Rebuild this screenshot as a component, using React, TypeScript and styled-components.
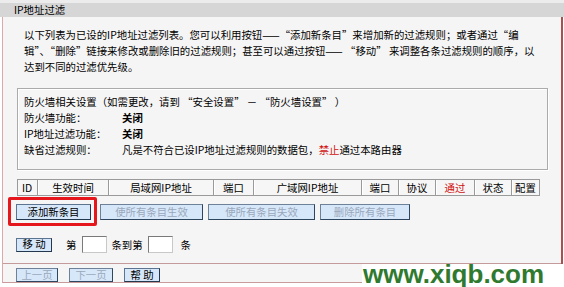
import styled, { createGlobalStyle, css } from 'styled-components';

const GlobalStyle = createGlobalStyle`
  html, body {
    margin: 0;
    padding: 0;
    background: #ffffff;
  }
  body {
    width: 564px;
    height: 287px;
    overflow: hidden;
    font-family: "Noto Sans CJK SC", "DejaVu Sans", sans-serif;
    font-size: 10.4px;
    color: #000;
  }
`;

const Page = styled.div`
  position: relative;
  width: 564px;
  height: 287px;
`;

const Header = styled.div`
  height: 14px;
  line-height: 14px;
  border-top: 3px solid #ececec;
  background: #d6d6d6;
  padding-left: 14px;
`;

const Panel = styled.div`
  margin: 0 1px 0 2px;
  height: 266px;
  box-sizing: border-box;
  padding: 10px 0 0 13px;
  background: #f6f5f5;
  border-left: 1px solid #dca8a8;
  border-right: 2px solid #a85050;
  border-bottom: 1px solid #c89a9a;
`;

const Intro = styled.div`
  padding-left: 8px;
  line-height: 16px;
`;

const Line = styled.div`
  white-space: nowrap;
`;

const InfoBox = styled.div`
  margin: 13px 0 0 1px;
  width: 531px;
  box-sizing: border-box;
  padding: 5px 0 11px 6px;
  border: 1px solid #ababab;
  box-shadow: 1px 1px 0 #ffffff, inset 1px 1px 0 #ffffff;
  line-height: 16px;
`;

const InfoRow = styled.div`
  display: flex;
  white-space: nowrap;
`;

const InfoLabel = styled.span`
  width: 98px;
`;

const Bold = styled.span`
  font-weight: bold;
`;

const Red = styled.span`
  color: #d01010;
`;

const Table = styled.div`
  display: flex;
  margin: 9px 0 0 1px;
  width: 523px;
  height: 17px;
  box-sizing: border-box;
  border: 1px solid #9a9a9a;
  background: #f6f6f6;
`;

const Cell = styled.div<{ $w: number; $red?: boolean; $left?: boolean }>`
  width: ${(p) => p.$w}px;
  box-sizing: border-box;
  line-height: 15px;
  text-align: ${(p) => (p.$left ? 'left' : 'center')};
  padding-left: ${(p) => (p.$left ? '4px' : '0')};
  color: ${(p) => (p.$red ? '#d01010' : '#000')};
  white-space: nowrap;
  & + & {
    border-left: 1px solid #9a9a9a;
    box-shadow: inset 1px 0 0 #ffffff;
  }
`;

const Row = styled.div<{ $top: number; $gap?: number }>`
  display: flex;
  align-items: center;
  margin-top: ${(p) => p.$top}px;
  gap: ${(p) => p.$gap ?? 0}px;
`;

const Button = styled.button<{ $w: number; $h: number; $off?: boolean; $ml?: number }>`
  width: ${(p) => p.$w}px;
  height: ${(p) => p.$h}px;
  padding: 0;
  margin: 0 0 0 ${(p) => p.$ml ?? 0}px;
  font-family: inherit;
  font-size: 10.4px;
  line-height: 1;
  background: #d6e7fa;
  border: 1px solid;
  border-color: #5c7490 #22384f #22384f #5c7490;
  color: #000;
  white-space: nowrap;
  ${(p) =>
    p.$off &&
    css`
      color: #9aa7bb;
      border-color: #6d8198 #2e4660 #2e4660 #6d8198;
    `}
`;

const Highlight = styled.span`
  position: relative;
  display: inline-flex;
  &::before {
    content: '';
    position: absolute;
    left: -8px;
    right: -6px;
    top: -7px;
    bottom: -6px;
    border: 3px solid #e5161c;
    border-radius: 2px;
  }
`;

const Text = styled.span<{ $ml?: number }>`
  margin-left: ${(p) => p.$ml ?? 0}px;
  white-space: nowrap;
`;

const Box = styled.span<{ $ml?: number }>`
  display: inline-block;
  width: 25px;
  height: 17px;
  box-sizing: border-box;
  margin-left: ${(p) => p.$ml ?? 0}px;
  background: #ffffff;
  border: 1px solid;
  border-color: #7a7a7a #c8c8c8 #c8c8c8 #7a7a7a;
`;

const Divider = styled.div`
  height: 1px;
  margin: 10px 0 0 -13px;
  background: #c49a9a;
`;

const Watermark = styled.div`
  position: absolute;
  left: 362px;
  top: 264px;
  width: 202px;
  height: 23px;
  background: #ffffff;
  overflow: hidden;
  font-family: "Liberation Sans", Arial, sans-serif;
  font-weight: bold;
  font-size: 26px;
  line-height: 26px;
  color: #2f7a2f;
  white-space: nowrap;
  span {
    display: block;
    margin: -3px 0 0 1px;
  }
`;

const columns = [
  { name: 'ID', w: 19, left: true },
  { name: '生效时间', w: 71 },
  { name: '局域网IP地址', w: 105 },
  { name: '端口', w: 40 },
  { name: '广域网IP地址', w: 108 },
  { name: '端口', w: 37 },
  { name: '协议', w: 37 },
  { name: '通过', w: 39, red: true },
  { name: '状态', w: 37 },
  { name: '配置', w: 28 },
];

export default function App() {
  return (
    <Page>
      <GlobalStyle />
      <Header>IP地址过滤</Header>
      <Panel>
        <Intro>
          <Line>以下列表为已设的IP地址过滤列表。您可以利用按钮——“添加新条目”来增加新的过滤规则；或者通过“编</Line>
          <Line>辑”、“删除”链接来修改或删除旧的过滤规则；甚至可以通过按钮—— “移动” 来调整各条过滤规则的顺序，以</Line>
          <Line>达到不同的过滤优先级。</Line>
        </Intro>
        <InfoBox>
          <InfoRow>防火墙相关设置（如需更改，请到 “安全设置” － “防火墙设置” ）</InfoRow>
          <InfoRow>
            <InfoLabel>防火墙功能：</InfoLabel>
            <Bold>关闭</Bold>
          </InfoRow>
          <InfoRow>
            <InfoLabel>IP地址过滤功能：</InfoLabel>
            <Bold>关闭</Bold>
          </InfoRow>
          <InfoRow>
            <InfoLabel>缺省过滤规则：</InfoLabel>
            <span>
              凡是不符合已设IP地址过滤规则的数据包，<Red>禁止</Red>通过本路由器
            </span>
          </InfoRow>
        </InfoBox>
        <Table>
          {columns.map((c, i) => (
            <Cell key={i} $w={c.w} $red={c.red} $left={c.left}>
              {c.name}
            </Cell>
          ))}
        </Table>
        <Row $top={8}>
          <Highlight>
            <Button $w={75} $h={16}>添加新条目</Button>
          </Highlight>
          <Button $w={103} $h={16} $off $ml={9}>使所有条目生效</Button>
          <Button $w={107} $h={16} $off $ml={5}>使所有条目失效</Button>
          <Button $w={90} $h={16} $off $ml={5}>删除所有条目</Button>
        </Row>
        <Row $top={16}>
          <Button $w={36} $h={14}>移 动</Button>
          <Text $ml={14}>第</Text>
          <Box $ml={6} />
          <Text $ml={4}>条到第</Text>
          <Box $ml={5} />
          <Text $ml={8}>条</Text>
        </Row>
        <Divider />
        <Row $top={4} $gap={11}>
          <Button $w={42} $h={14} $off>上一页</Button>
          <Button $w={44} $h={14} $off>下一页</Button>
          <Button $w={36} $h={14}>帮 助</Button>
        </Row>
      </Panel>
      <Watermark>
        <span>www.xiqb.com</span>
      </Watermark>
    </Page>
  );
}
